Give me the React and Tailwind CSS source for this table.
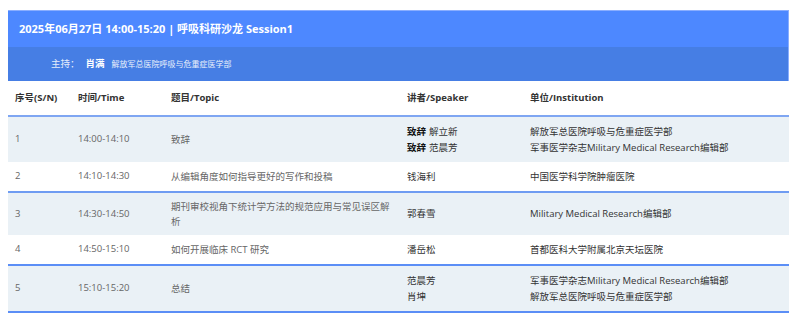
export default function App() {
  const rows = [
    {
      sn: "1",
      time: "14:00-14:10",
      topic: "致辞",
      speakers: [
        { tag: "致辞", name: "解立新" },
        { tag: "致辞", name: "范晨芳" },
      ],
      inst: ["解放军总医院呼吸与危重症医学部", "军事医学杂志Military Medical Research编辑部"],
      hl: true,
      h: "h-[46px]",
      border: "",
    },
    {
      sn: "2",
      time: "14:10-14:30",
      topic: "从编辑角度如何指导更好的写作和投稿",
      speakers: [{ name: "钱海利" }],
      inst: ["中国医学科学院肿瘤医院"],
      hl: false,
      h: "h-[30px]",
      border: "",
    },
    {
      sn: "3",
      time: "14:30-14:50",
      topic: "期刊审校视角下统计学方法的规范应用与常见误区解析",
      speakers: [{ name: "郭春雪" }],
      inst: ["Military Medical Research编辑部"],
      hl: true,
      h: "h-[43px]",
      border: "border-t-2 border-t-[#6f9cf2]",
    },
    {
      sn: "4",
      time: "14:50-15:10",
      topic: "如何开展临床 RCT 研究",
      speakers: [{ name: "潘岳松" }],
      inst: ["首都医科大学附属北京天坛医院"],
      hl: false,
      h: "h-[30px]",
      border: "",
    },
    {
      sn: "5",
      time: "15:10-15:20",
      topic: "总结",
      speakers: [{ name: "范晨芳" }, { name: "肖坤" }],
      inst: ["军事医学杂志Military Medical Research编辑部", "解放军总医院呼吸与危重症医学部"],
      hl: true,
      h: "h-[47px]",
      border: "border-y-2 border-y-[#5b8ef6]",
    },
  ];

  return (
    <div
      className="w-[800px] h-[323px] bg-white pt-[10px] pl-[8px]"
      style={{ fontFamily: '"Open Sans", "Noto Sans CJK SC", sans-serif' }}
    >
      <div className="w-[781px]">
        <div className="h-[37px] bg-[#4d88ff] border-t border-t-[#8aaeff] border-r border-r-[#8aaeff] flex items-center pl-[11px] text-white text-[11px] font-bold">
          2025年06月27日 14:00-15:20 | 呼吸科研沙龙 Session1
        </div>
        <div className="h-[34px] bg-[#467ee4] border-r border-r-[#8aaeff] flex items-center pl-[43px] text-[#e4ecfb]">
          <span className="text-[9.5px]">主持：</span>
          <span className="text-[9.5px] font-bold text-white ml-[6px]">肖满</span>
          <span className="text-[8px] ml-[7px] text-[#e8eefb]">解放军总医院呼吸与危重症医学部</span>
        </div>
        <table className="w-[781px] table-fixed border-collapse text-[9.5px]">
          <colgroup>
            <col className="w-[63px]" />
            <col className="w-[93px]" />
            <col className="w-[236px]" />
            <col className="w-[123px]" />
            <col />
          </colgroup>
          <thead>
            <tr className="h-[35px] border-b-2 border-b-[#7fa6f2] text-[#333] font-bold text-left">
              <th className="px-[7px] font-bold">序号(S/N)</th>
              <th className="px-[7px] font-bold">时间/Time</th>
              <th className="px-[7px] font-bold">题目/Topic</th>
              <th className="px-[7px] font-bold">讲者/Speaker</th>
              <th className="px-[7px] font-bold">单位/Institution</th>
            </tr>
          </thead>
          <tbody>
            {rows.map((r) => (
              <tr key={r.sn} className={`${r.h} ${r.hl ? "bg-[#eaf1f6]" : "bg-white"} ${r.border}`}>
                <td className="px-[7px] align-middle text-[#666]">{r.sn}</td>
                <td className="px-[7px] align-middle text-[#666]">{r.time}</td>
                <td className="px-[7px] align-middle text-[#666] leading-[15px]">{r.topic}</td>
                <td className="px-[7px] align-middle text-[#333] leading-[16px]">
                  {r.speakers.map((s, i) => (
                    <div key={i}>
                      {s.tag && <span className="font-bold text-[#111] mr-[3px]">{s.tag}</span>}
                      {s.name}
                    </div>
                  ))}
                </td>
                <td className="px-[7px] align-middle text-[#333] leading-[16px]">
                  {r.inst.map((t, i) => (
                    <div key={i}>{t}</div>
                  ))}
                </td>
              </tr>
            ))}
          </tbody>
        </table>
      </div>
    </div>
  );
}
